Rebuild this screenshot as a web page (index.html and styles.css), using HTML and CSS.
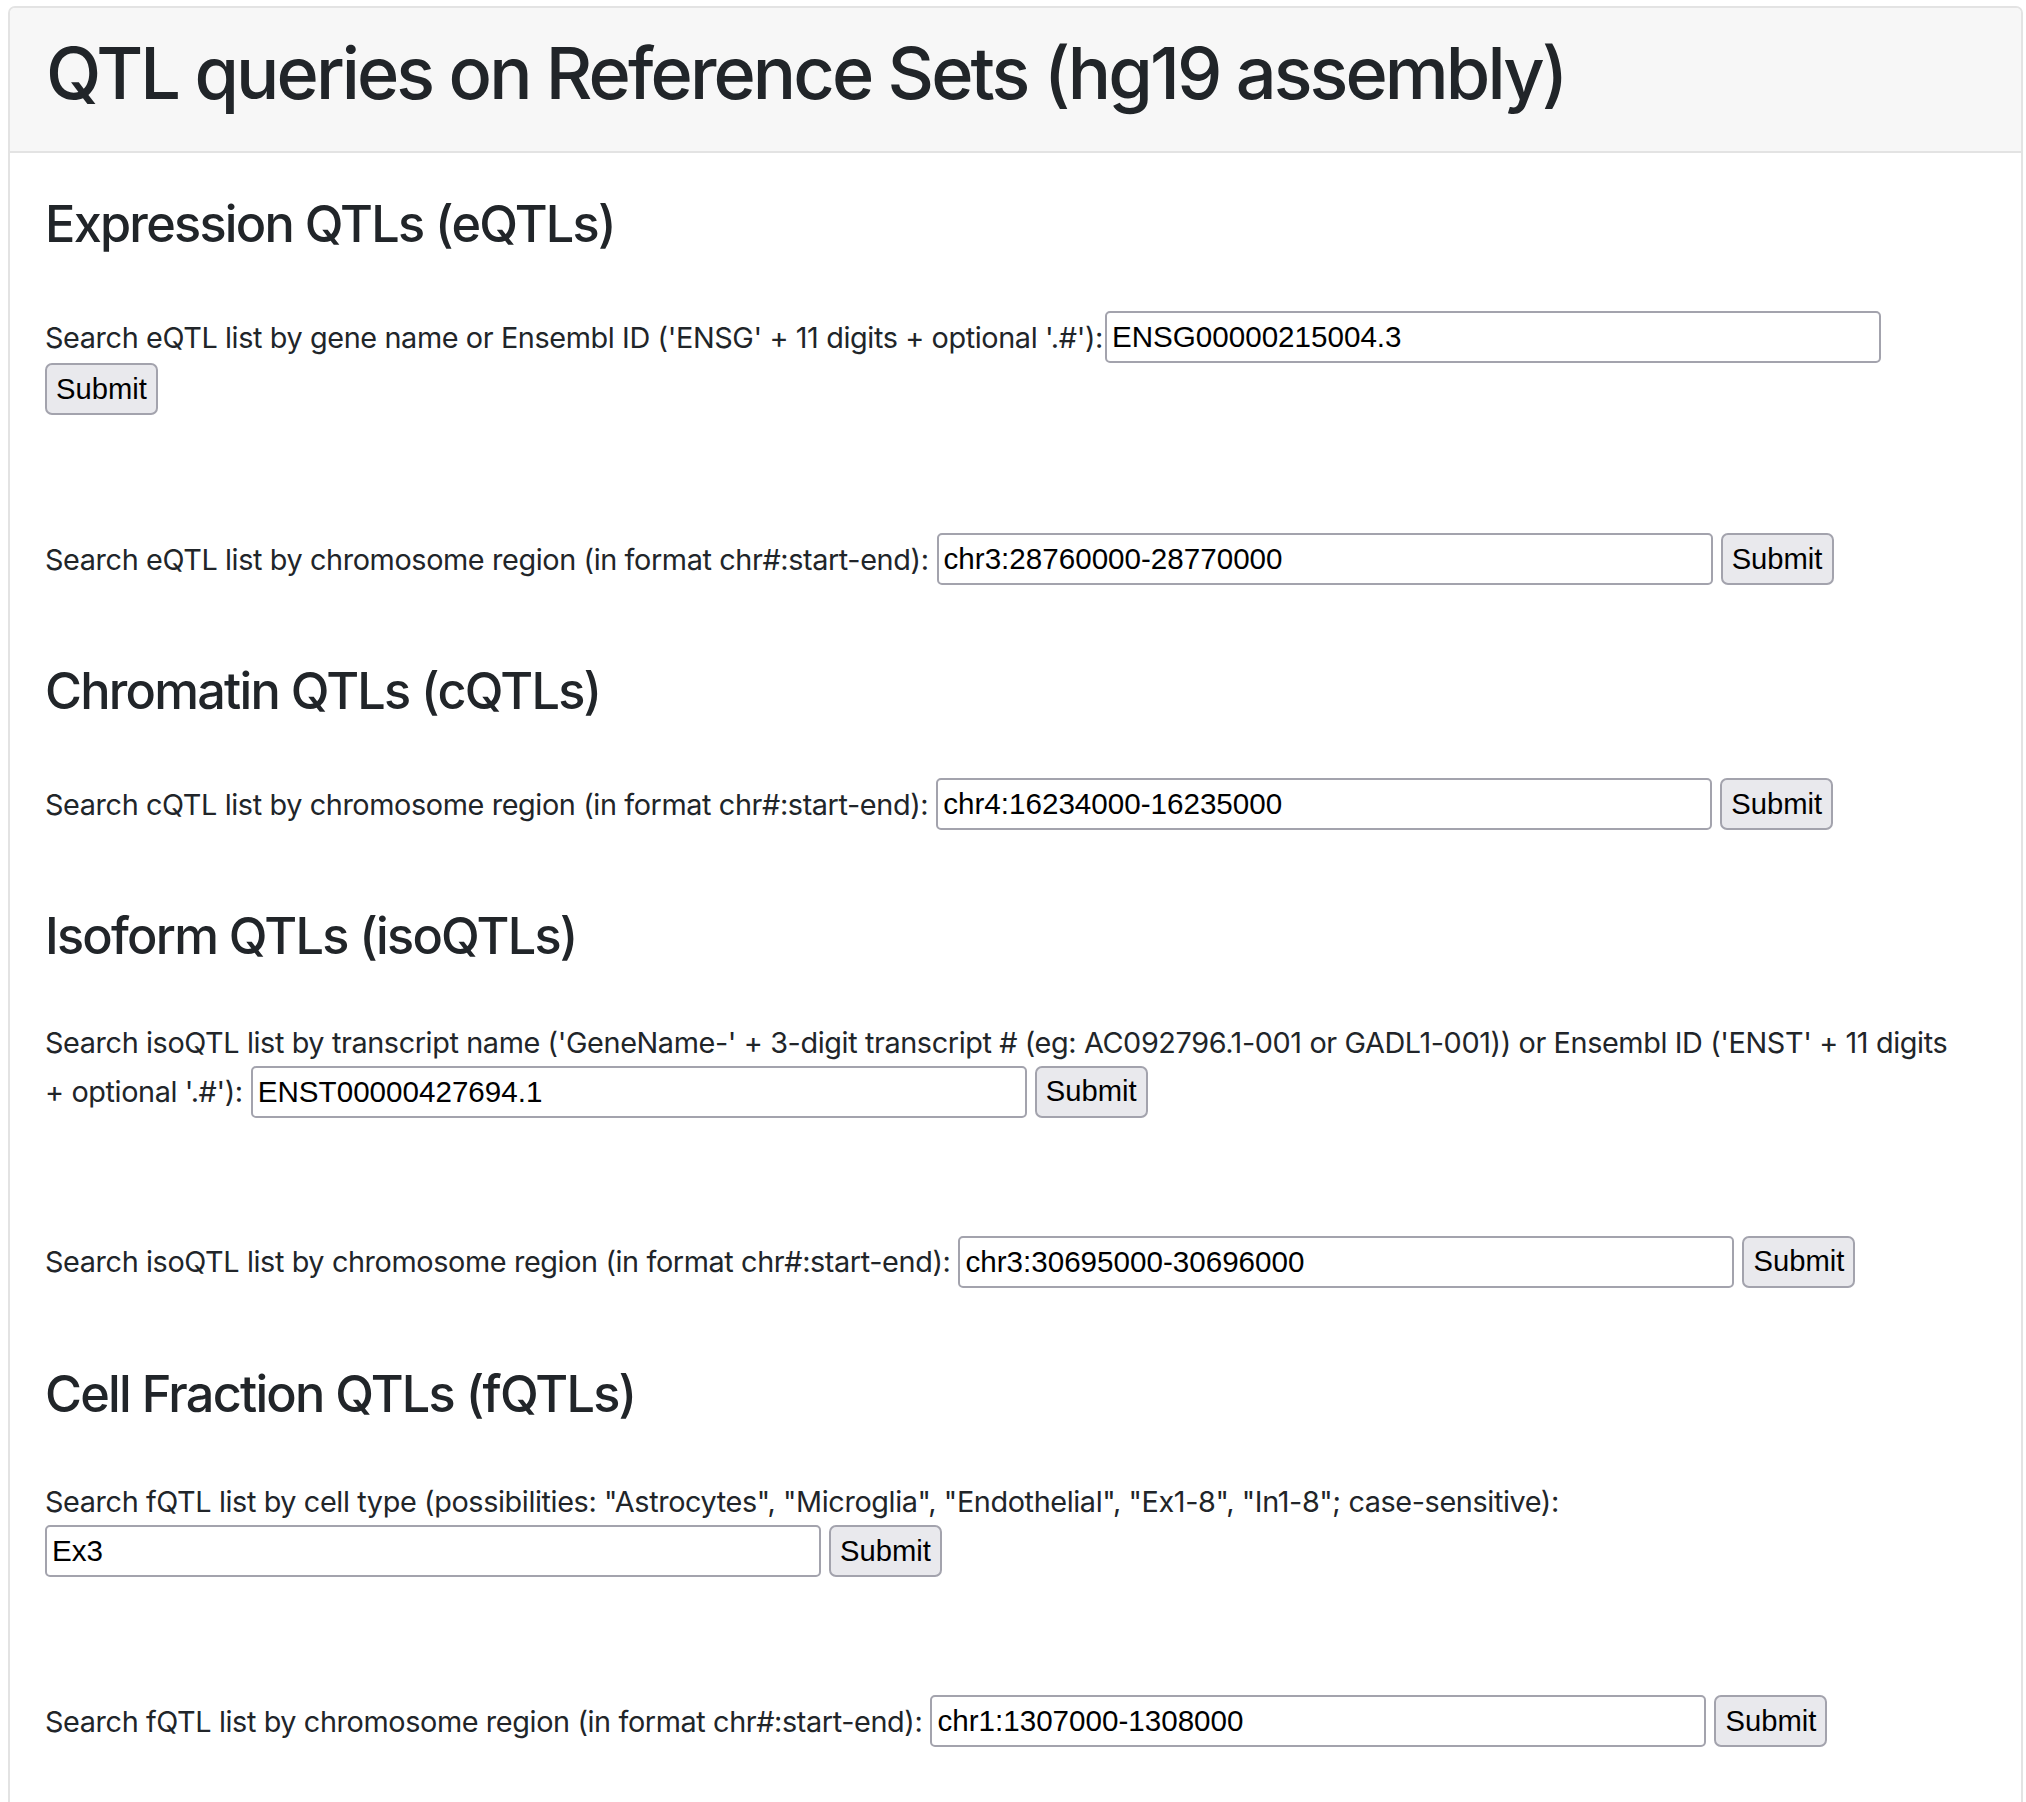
FILE: index.html
```html
<!DOCTYPE html>
<html lang="en">
<head>
<meta charset="utf-8">
<title>QTL queries on Reference Sets (hg19 assembly)</title>
<link rel="stylesheet" href="styles.css">
</head>
<body>
<div class="card">
  <div class="card-header">
    <h1 class="title">QTL queries on Reference Sets (hg19 assembly)</h1>
  </div>
  <div class="card-body">
    <h3 class="sec-title first">Expression QTLs (eQTLs)</h3>
    <form class="query after-heading">
      <div class="line tight">
        <label class="lbl" for="eg">Search eQTL list by gene name or Ensembl ID ('ENSG' + 11 digits + optional '.#'):</label>
        <input class="field" id="eg" type="text" value="ENSG00000215004.3">
      </div>
      <div class="line">
        <button class="btn" type="button">Submit</button>
      </div>
    </form>
    <form class="query spaced">
      <div class="line">
        <label class="lbl" for="er">Search eQTL list by chromosome region (in format chr#:start-end):</label>
        <input class="field" id="er" type="text" value="chr3:28760000-28770000">
        <button class="btn" type="button">Submit</button>
      </div>
    </form>

    <h3 class="sec-title">Chromatin QTLs (cQTLs)</h3>
    <form class="query after-heading">
      <div class="line">
        <label class="lbl" for="cr">Search cQTL list by chromosome region (in format chr#:start-end):</label>
        <input class="field" id="cr" type="text" value="chr4:16234000-16235000">
        <button class="btn" type="button">Submit</button>
      </div>
    </form>

    <h3 class="sec-title">Isoform QTLs (isoQTLs)</h3>
    <form class="query">
      <p class="note">Search isoQTL list by transcript name ('GeneName-' + 3-digit transcript # (eg: AC092796.1-001 or GADL1-001)) or Ensembl ID ('ENST' + 11 digits</p>
      <div class="line after-note">
        <label class="lbl" for="it">+ optional '.#'):</label>
        <input class="field" id="it" type="text" value="ENST00000427694.1">
        <button class="btn" type="button">Submit</button>
      </div>
    </form>
    <form class="query spaced">
      <div class="line">
        <label class="lbl" for="ir">Search isoQTL list by chromosome region (in format chr#:start-end):</label>
        <input class="field" id="ir" type="text" value="chr3:30695000-30696000">
        <button class="btn" type="button">Submit</button>
      </div>
    </form>

    <h3 class="sec-title">Cell Fraction QTLs (fQTLs)</h3>
    <form class="query">
      <p class="note note-f">Search fQTL list by cell type (possibilities: "Astrocytes", "Microglia", "Endothelial", "Ex1-8", "In1-8"; case-sensitive):</p>
      <div class="line after-note">
        <input class="field" type="text" value="Ex3" aria-label="Cell type">
        <button class="btn" type="button">Submit</button>
      </div>
    </form>
    <form class="query spaced">
      <div class="line">
        <label class="lbl" for="fr">Search fQTL list by chromosome region (in format chr#:start-end):</label>
        <input class="field" id="fr" type="text" value="chr1:1307000-1308000">
        <button class="btn" type="button">Submit</button>
      </div>
    </form>
  </div>
</div>
</body>
</html>
```
FILE: styles.css
```css
html, body {
  background: #ffffff;
}

body {
  margin: 6px 3px 0 8px;
  font-family: Inter, "Noto Sans", sans-serif;
  color: #212529;
}

.card {
  border: 2px solid #e3e3e3;
  border-radius: 7px;
}

.card-header {
  background: #f7f7f7;
  border-bottom: 2px solid #e3e3e3;
  border-radius: 5px 5px 0 0;
  padding: 22px 36px 35px;
}

.title {
  margin: 0;
  font-size: 72px;
  font-weight: 500;
  line-height: 86px;
  letter-spacing: -2.9px;
}

.card-body {
  padding: 41px 37px 80px 35px;
}

.sec-title {
  margin: 76px 0 0;
  font-size: 50.4px;
  font-weight: 500;
  line-height: 60.5px;
  letter-spacing: -1.75px;
}

.sec-title.first {
  margin-top: 0;
}

.query {
  margin: 0;
}

.after-heading {
  margin-top: 56.5px;
}

.spaced {
  margin-top: 118px;
}

.line {
  display: flex;
  align-items: center;
  gap: 8px;
  height: 52px;
}

.line.tight {
  gap: 2px;
}

.lbl {
  font-size: 28.8px;
  line-height: 43px;
  letter-spacing: -0.38px;
  white-space: nowrap;
}

.note {
  margin: 54px 0 0;
  font-size: 28.8px;
  line-height: 43px;
  letter-spacing: -0.38px;
  white-space: nowrap;
}

.note-f {
  margin-top: 56px;
}

.after-note {
  margin-top: 2px;
}

.field {
  box-sizing: border-box;
  width: 776px;
  height: 52px;
  margin: 0;
  padding: 0 5px;
  border: 2px solid #a3a3ad;
  border-radius: 5px;
  background: #ffffff;
  font-family: "Liberation Sans", Arial, sans-serif;
  font-size: 29.6px;
  color: #000000;
}

.btn {
  box-sizing: border-box;
  width: 113px;
  height: 52px;
  margin: 0;
  padding: 0;
  border: 2px solid #a3a3ad;
  border-radius: 7px;
  background: #e9e9ed;
  font-family: "Liberation Sans", Arial, sans-serif;
  font-size: 29.2px;
  color: #000000;
}
```
